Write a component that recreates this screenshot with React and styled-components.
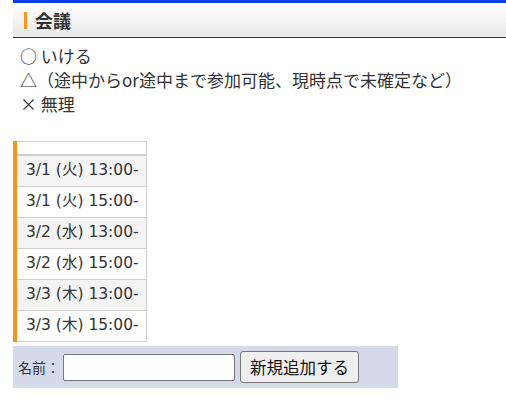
import React from 'react';
import styled, { createGlobalStyle } from 'styled-components';

const GlobalStyle = createGlobalStyle`
  html, body {
    margin: 0;
    padding: 0;
    background: #fff;
  }
  body {
    font-family: "Noto Sans", "Noto Sans CJK JP", sans-serif;
    color: #333;
  }
`;

const Page = styled.div`
  padding-left: 13px;
`;

const Header = styled.h2`
  margin: 0;
  height: 34px;
  display: flex;
  align-items: center;
  gap: 8px;
  padding-left: 11px;
  border-top: 3px solid #0a3cf0;
  border-bottom: 1px solid #0033ff;
  background: linear-gradient(to bottom, #ffffff 0%, #f4f4f4 50%, #e8e8e8 100%);
  font-family: "Noto Sans CJK JP", sans-serif;
  font-size: 18px;
  font-weight: bold;
  color: #333;
  line-height: 1;
`;

const Accent = styled.span`
  width: 3px;
  height: 17px;
  background: #f7941d;
`;

const Legend = styled.div`
  padding: 6px 0 0 7px;
  font-size: 17px;
  line-height: 24px;
  font-family: "Noto Sans CJK JP", sans-serif;
  margin-bottom: 25px;
`;

const Table = styled.table`
  border-collapse: collapse;
  border-left: 4px solid #f7941d;
  font-size: 15.5px;
  font-family: "DejaVu Sans", "Noto Sans CJK JP", sans-serif;
  color: #333;
`;

const HeadCell = styled.th`
  height: 12px;
  padding: 0;
  border: 1px solid #cfcfcf;
  border-left: none;
  border-bottom: 2px solid #cfcfcf;
`;

const Cell = styled.td`
  height: 30px;
  padding: 0 7px 0 9px;
  border: 1px solid #cfcfcf;
  border-left: none;
  background: ${p => (p.$odd ? '#f4f4f4' : '#fff')};
  white-space: nowrap;
  line-height: 1;
`;

const Form = styled.form`
  margin-top: 4px;
  width: 385px;
  height: 42px;
  box-sizing: border-box;
  display: flex;
  align-items: center;
  padding-left: 5px;
  background: #d4daea;
  font-family: "Noto Sans CJK JP", sans-serif;
`;

const Label = styled.label`
  font-size: 14px;
  color: #333;
`;

const NameInput = styled.input`
  width: 172px;
  height: 27px;
  box-sizing: border-box;
  margin: 0 5px 0 3px;
  border: 1px solid #767676;
  border-radius: 2px;
  padding: 1px 2px;
  font-size: 14px;
  background: #fff;
`;

const Button = styled.button`
  width: 119px;
  height: 32px;
  box-sizing: border-box;
  border: 1px solid #767676;
  border-radius: 3px;
  background: #efefef;
  color: #111;
  font-family: "Noto Sans CJK JP", sans-serif;
  font-size: 16.5px;
  padding: 0;
`;

const slots = [
  '3/1 (火) 13:00-',
  '3/1 (火) 15:00-',
  '3/2 (水) 13:00-',
  '3/2 (水) 15:00-',
  '3/3 (木) 13:00-',
  '3/3 (木) 15:00-',
];

export default function App() {
  return (
    <Page>
      <GlobalStyle />
      <Header>
        <Accent />
        会議
      </Header>
      <Legend>
        <div>○ いける</div>
        <div>△（途中からor途中まで参加可能、現時点で未確定など）</div>
        <div>× 無理</div>
      </Legend>
      <Table>
        <thead>
          <tr>
            <HeadCell />
          </tr>
        </thead>
        <tbody>
          {slots.map((s, i) => (
            <tr key={s}>
              <Cell $odd={i % 2 === 0}>{s}</Cell>
            </tr>
          ))}
        </tbody>
      </Table>
      <Form onSubmit={e => e.preventDefault()}>
        <Label>名前：</Label>
        <NameInput type="text" />
        <Button type="submit">新規追加する</Button>
      </Form>
    </Page>
  );
}
